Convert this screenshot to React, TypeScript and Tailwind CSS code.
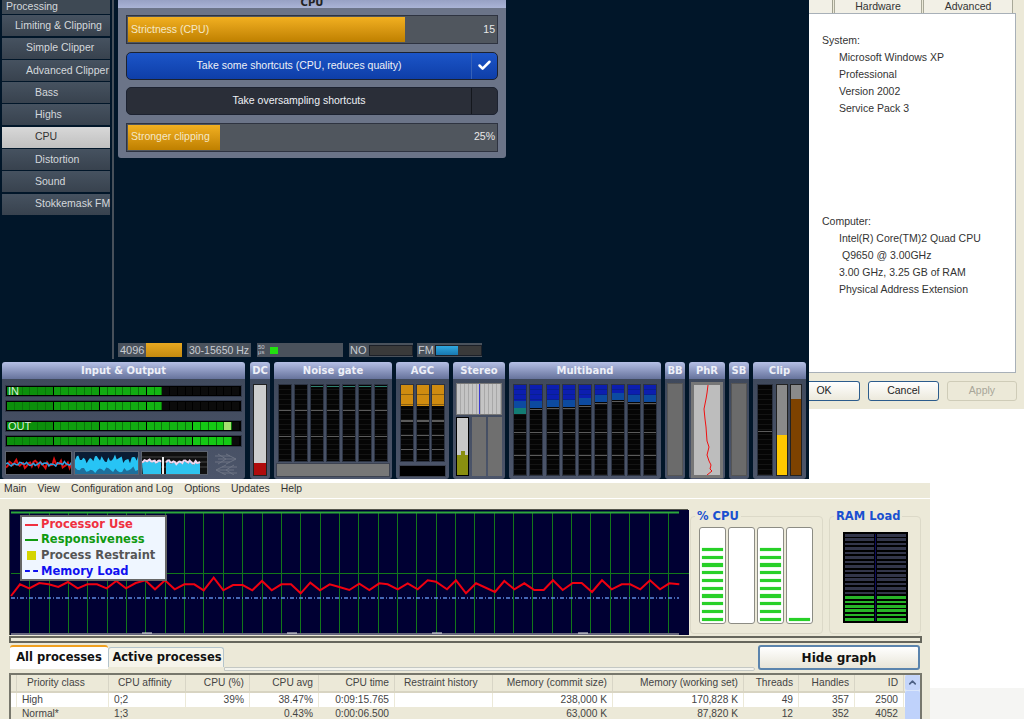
import React from 'react';
import { Check, ChevronUp } from 'lucide-react';

const sideItems: [string, string, string][] = [
  ['Limiting & Clipping', 'pl-[13px]', ''],
  ['Simple Clipper', 'pl-[24px]', ''],
  ['Advanced Clipper', 'pl-[24px]', ''],
  ['Bass', 'pl-[33px]', ''],
  ['Highs', 'pl-[33px]', ''],
  ['CPU', 'pl-[33px]', 'active'],
  ['Distortion', 'pl-[33px]', ''],
  ['Sound', 'pl-[33px]', ''],
  ['Stokkemask FM', 'pl-[33px]', ''],
];

const Slider = ({ label, value, fill }: { label: string; value: string; fill: number }) => (
  <div className="flex h-[29px] border border-[#2e3340] bg-[#50565e] p-px text-[10.5px] text-[#e8e8e8]">
    <div className="flex h-full items-center whitespace-nowrap bg-gradient-to-b from-[#f2b020] to-[#bf8000] pl-[3px] text-[#f4e8c8]" style={{ width: fill }}>
      {label}
    </div>
    <div className="flex flex-1 items-center justify-end pr-px">{value}</div>
  </div>
);

const Toggle = ({ label, on }: { label: string; on: boolean }) => (
  <div className={`flex h-[28px] rounded-[5px] border border-[#1c2230] text-[10.5px] text-[#eef1f6] ${on ? 'bg-gradient-to-b from-[#1c55c8] to-[#0e3ea8]' : 'bg-[#2a2e38]'}`}>
    <div className="flex flex-1 items-center justify-center">{label}</div>
    <div className={`flex w-[26px] items-center justify-center border-l ${on ? 'border-[#3561b8]' : 'border-[#14171d]'}`}>
      {on && <Check size={15} strokeWidth={4} className="text-white" />}
    </div>
  </div>
);

const Panel = ({ title, width, children, className = '' }: { title: string; width: number; children?: React.ReactNode; className?: string }) => (
  <div className="flex h-[117px] shrink-0 flex-col overflow-hidden rounded-[3px]" style={{ width }}>
    <div className="flex h-[17px] shrink-0 items-center justify-center bg-gradient-to-b from-[#b6c0e6] to-[#66739c] font-['DejaVu_Sans',sans-serif] text-[10px] font-bold text-[#eef0f8]">
      {title}
    </div>
    <div className={`flex-1 bg-gradient-to-b from-[#3f495c] to-[#4c556a] ${className}`}>{children}</div>
  </div>
);

const segColor = (i: number, peak: boolean) => {
  if (peak) return 'bg-[#a6e070]';
  if (i < 6) return 'bg-[#0c8f0c]';
  if (i < 12) return 'bg-[#0f9e0f]';
  if (i < 18) return 'bg-[#12ab12]';
  if (i < 24) return 'bg-[#13b513]';
  return 'bg-[#15c815]';
};

const HMeter = ({ count, peak, label }: { count: number; peak?: number; label?: string }) => (
  <div className="relative flex h-[12px] border border-[#30384a] bg-black p-px">
    {Array.from({ length: 30 }).map((_, i) => (
      <div
        key={i}
        className={`flex-1 border-r ${i % 6 === 5 ? 'border-black' : i < count ? 'border-[#0a760a]' : 'border-black'} ${i < count ? segColor(i, i === peak) : 'bg-[#0b0b0b]'}`}
      />
    ))}
    {label && <span className="absolute left-[2px] top-[-2px] text-[11px] leading-[14px] text-[#d7edd7]">{label}</span>}
  </div>
);

const Strip = ({ width = 14, height, fills = [], ticks = [] }: {
  width?: number; height: number; fills?: { top: number; h: number; c: string }[]; ticks?: number[];
}) => (
  <div
    className="relative shrink-0 border border-[#2c3342] bg-[repeating-linear-gradient(to_bottom,#050505_0,#050505_4px,#141414_4px,#141414_5px)]"
    style={{ width, height }}
  >
    {ticks.map(t => <div key={t} className="absolute inset-x-0 h-px bg-[#5c5c5c]" style={{ top: t }} />)}
    {fills.map(f => <div key={f.top} className={`absolute inset-x-0 ${f.c}`} style={{ top: f.top, height: f.h }} />)}
  </div>
);

const wave = (n: number, w: number, mid: number, amp: number, seed: number) =>
  Array.from({ length: n }).map((_, i) => {
    const x = (i / (n - 1)) * w;
    const y = mid + amp * (Math.sin(i * 1.7 + seed) * 0.6 + Math.sin(i * 0.53 + seed * 2) * 0.4 + Math.sin(i * 3.1) * 0.3);
    return `${x.toFixed(1)},${y.toFixed(1)}`;
  }).join(' ');

const shifted = (pts: string, dx: number) =>
  pts.split(' ').map(p => {
    const [x, y] = p.split(',');
    return `${Number(x) + dx},${y}`;
  }).join(' ');

const Scopes = () => (
  <div className="mt-[4px] flex items-center gap-[2px]">
    <svg width="67" height="24" className="border border-[#5d6470] bg-black">
      <polyline points={wave(40, 67, 12, 4, 1)} fill="none" stroke="#e01010" strokeWidth="2" />
      <polyline points={wave(40, 67, 12, 2, 3)} fill="none" stroke="#30a0e0" strokeWidth="1.5" />
    </svg>
    <svg width="65" height="24" className="border border-[#5d6470] bg-[#0a1c34]">
      <polygon points={`0,24 ${wave(40, 65, 7, 4, 2)} 65,24`} fill="#27c4f5" />
      <polygon points={`0,24 ${wave(30, 65, 18, 3, 5)} 65,24`} fill="#1d6f9c" />
    </svg>
    <svg width="67" height="24" className="border border-[#5d6470] bg-[#101010]">
      <line x1="0" x2="67" y1="5" y2="5" stroke="#444" />
      <line x1="0" x2="67" y1="10" y2="10" stroke="#444" />
      <line x1="0" x2="67" y1="15" y2="15" stroke="#444" />
      <polygon points={`1,24 ${wave(16, 19, 10, 1.5, 1)} 19,24`} fill="#2ec4f0" />
      <polygon points={`24,24 ${shifted(wave(24, 34, 11, 2, 2), 24)} 58,24`} fill="#2ec4f0" />
      <polyline points={wave(16, 19, 9, 1.5, 1)} fill="none" stroke="#f0d8f0" strokeWidth="2" />
      <polyline points={shifted(wave(24, 34, 10, 2, 2), 24)} fill="none" stroke="#f0d8f0" strokeWidth="2" />
      <line x1="21" x2="21" y1="5" y2="24" stroke="#eee" strokeWidth="2" />
    </svg>
    <svg width="28" height="24" className="ml-[2px]">
      <path d="M3 5 L18 5 M6 8 L24 8 M3 11 L18 11 M14 3 L24 8 L14 13 M6 3 L14 8 L6 13" fill="none" stroke="#6c7383" strokeWidth="1" />
      <path d="M10 16 L25 16 M4 19 L22 19 M10 22 L25 22 M14 14 L4 19 L14 24 M22 14 L14 19 L22 24" fill="none" stroke="#6c7383" strokeWidth="1" />
    </svg>
  </div>
);

const InputOutput = () => (
  <Panel title="Input & Output" width={243} className="px-[3px] pt-[6px]">
    <div className="flex flex-col gap-[3px]">
      <HMeter count={20} label="IN" />
      <HMeter count={20} />
    </div>
    <div className="mt-[8px] flex flex-col gap-[3px]">
      <HMeter count={29} peak={28} label="OUT" />
      <HMeter count={29} />
    </div>
    <Scopes />
  </Panel>
);

const NoiseGate = () => (
  <Panel title="Noise gate" width={118} className="px-[2px] pt-[5px]">
    <div className="flex justify-between px-[2px]">
      {[0, 1, 2, 3, 4, 5, 6].map(i => (
        <Strip key={i} height={78} ticks={[25, 51]} fills={i > 1 ? [{ top: 1, h: 1, c: 'bg-[#2f7f70]' }] : []} />
      ))}
    </div>
    <div className="mt-[1px] h-[14px] border border-[#3c4250] bg-[#777]" />
  </Panel>
);

const Agc = () => (
  <Panel title="AGC" width={53} className="px-[3px] pt-[5px]">
    <div className="flex justify-between px-px">
      {[0, 1, 2].map(i => (
        <Strip key={i} height={78} ticks={[35, 36, 50, 64]} fills={[{ top: 0, h: 21, c: 'bg-[repeating-linear-gradient(to_bottom,#d08c10_0,#d08c10_9px,#8a6010_9px,#8a6010_10px)]' }]} />
      ))}
    </div>
    <div className="mt-[3px] h-[12px] border border-[#3c4250] bg-black" />
  </Panel>
);

const Stereo = () => (
  <Panel title="Stereo" width={52} className="px-[3px] pt-[4px]">
    <div className="relative h-[32px] border border-[#777] bg-[repeating-linear-gradient(to_right,#c4c4c4_0,#c4c4c4_3px,#a8a8a8_3px,#a8a8a8_4px)]">
      <div className="absolute inset-y-0 left-[22px] w-px bg-[#3a3ad0]" />
    </div>
    <div className="mt-[2px] flex justify-between">
      <div className="relative h-[59px] w-[13px] border border-black bg-[#c8c8c8]">
        <div className="absolute inset-x-0 bottom-0 h-[20px] bg-[#8a8f10]" />
        <div className="absolute bottom-0 left-[4px] h-[24px] w-[4px] bg-[#8a8f10]" />
      </div>
      <div className="h-[59px] w-[14px] bg-[#6f6f6f]" />
      <div className="h-[59px] w-[14px] bg-[#6f6f6f]" />
    </div>
  </Panel>
);

const bandHeights = [23, 23, 22, 22, 20, 17, 15, 17, 17];

const Multiband = () => (
  <Panel title="Multiband" width={152} className="px-[4px] pt-[5px]">
    <div className="flex justify-between">
      {bandHeights.map((h, i) => (
        <Strip
          key={i}
          height={92}
          ticks={[h + 1, 47, 70]}
          fills={[
            { top: 0, h, c: 'bg-[repeating-linear-gradient(to_bottom,#0c1eb0_0,#0c1eb0_4px,#082090_4px,#082090_5px)]' },
            { top: h - 7, h: 7, c: 'bg-[#0c4aa0]' },
            ...(i === 0 ? [{ top: h, h: 6, c: 'bg-[#127c74]' }] : []),
          ]}
        />
      ))}
    </div>
  </Panel>
);

const Blank = ({ title }: { title: string }) => (
  <Panel title={title} width={20} className="px-[2px] pt-[4px]">
    <div className="h-[93px] border border-[#555] bg-[#6b6b6b]" />
  </Panel>
);

const Phr = () => (
  <Panel title="PhR" width={36} className="p-[2px] pt-[3px]">
    <svg width="32" height="96" className="border-[3px] border-[#777] bg-[#bdbdbd]">
      <polyline points="14,0 13,8 12,14 10,24 11,34 12,42 13,56 15,62 13,70 15,76 17,80 16,84 18,86 13,90" fill="none" stroke="#f01010" strokeWidth="1" />
    </svg>
  </Panel>
);

const Clip = () => (
  <Panel title="Clip" width={53} className="px-[4px] pt-[5px]">
    <div className="flex justify-between">
      <Strip width={16} height={92} ticks={[46]} />
      <div className="flex h-[92px] w-[12px] flex-col border border-[#222] bg-[#8a8a8a]">
        <div className="mt-[50px] flex-1 bg-[#ffc800]" />
      </div>
      <div className="flex h-[92px] w-[12px] flex-col border border-[#222] bg-[#8a8a8a]">
        <div className="mt-[14px] flex-1 bg-[#7d4200]" />
      </div>
    </div>
  </Panel>
);

const StatusBar = () => (
  <div className="mt-[-1px] flex h-[14px] text-[11px] leading-[14px] text-[#c8ccd2]">
    <div className="flex w-[64px] bg-[#4a525c]">
      <span className="pl-[2px]">4096</span>
      <div className="ml-[2px] flex-1 bg-gradient-to-b from-[#e8a820] to-[#c48a10]" />
    </div>
    <div className="ml-[5px] w-[64px] whitespace-nowrap bg-[#4a525c] text-center text-[10.5px]">30-15650 Hz</div>
    <div className="ml-[6px] flex w-[86px] items-center bg-[#4a525c] pl-[1px]">
      <span className="w-[12px] text-[6px] leading-[5px]">50<br />μs</span>
      <div className="h-[7px] w-[8px] bg-[#22e010]" />
    </div>
    <div className="ml-[6px] flex w-[64px] items-center bg-[#4a525c] pl-[1px]">
      NO<div className="ml-[2px] h-[11px] flex-1 border border-[#1c2028] bg-[#3a3a3a]" />
    </div>
    <div className="ml-[4px] flex w-[65px] items-center bg-[#4a525c] pl-[1px]">
      FM
      <div className="ml-[1px] flex h-[11px] flex-1 border border-[#1c2028] bg-[#3a3a3a]">
        <div className="w-[22px] bg-gradient-to-b from-[#30a8e0] to-[#1878b0]" />
      </div>
    </div>
  </div>
);

const DarkWindow = () => (
  <div className="flex w-[809px] shrink-0 flex-col bg-[#011629] font-['Liberation_Sans',sans-serif]">
    <div className="flex h-[361px]">
      <div className="w-[110px] shrink-0 pl-[2px] text-[10.5px] text-[#d4d8dc]">
        <div className="flex h-[14px] items-end overflow-hidden bg-[#3e4954] pl-[4px] leading-[16px]">Processing</div>
        {sideItems.map(([name, pad, active]) => (
          <div
            key={name}
            className={`mt-[1.3px] flex h-[21px] items-center whitespace-nowrap ${pad} ${active ? 'bg-gradient-to-b from-[#d8d8d8] to-[#c0c0c0] text-[#333]' : 'bg-gradient-to-b from-[#465260] to-[#38424e]'}`}
          >
            {name}
          </div>
        ))}
      </div>
      <div className="ml-[2px] h-[359px] w-[2px] bg-[#47505a]" />
      <div className="ml-[4px] flex flex-col">
        <div className="w-[388px] rounded-b-[3px] bg-[#6b7488]">
          <div className="flex h-[8px] items-end justify-center overflow-hidden bg-gradient-to-b from-[#97a1c4] to-[#aab4d6] font-['DejaVu_Sans',sans-serif] text-[10px] font-bold leading-[8px] text-[#222]">
            <span className="translate-y-[-1px]">CPU</span>
          </div>
          <div className="flex flex-col gap-[7.5px] px-[8px] pb-[6px] pt-[7px]">
            <Slider label="Strictness (CPU)" value="15" fill={277} />
            <Toggle label="Take some shortcuts (CPU, reduces quality)" on />
            <Toggle label="Take oversampling shortcuts" on={false} />
            <Slider label="Stronger clipping" value="25%" fill={92} />
          </div>
        </div>
        <div className="mt-auto"><StatusBar /></div>
        <div className="h-[4px]" />
      </div>
    </div>
    <div className="flex gap-[4px] pl-[2px] pt-px">
      <InputOutput />
      <div className="ml-px">
        <Panel title="DC" width={20} className="px-[3px] pt-[5px]">
          <div className="flex h-[92px] w-[14px] flex-col justify-end border border-[#222] bg-[#cdcdcd]">
            <div className="h-[12px] bg-[#b00c0c]" />
          </div>
        </Panel>
      </div>
      <NoiseGate />
      <Agc />
      <Stereo />
      <Multiband />
      <Blank title="BB" />
      <Phr />
      <Blank title="SB" />
      <Clip />
    </div>
  </div>
);

const XpButton = ({ label, cls, disabled }: { label: string; cls: string; disabled?: boolean }) => (
  <div className={`flex h-[20px] items-center justify-center rounded-[3px] border ${disabled ? 'border-[#cfccb8] text-[#a8a698]' : 'border-[#2c5c8c] bg-gradient-to-b from-white to-[#ece9dc] text-[#222]'} ${cls}`}>
    {label}
  </div>
);

const Dialog = () => (
  <div className="flex h-[409px] flex-1 flex-col bg-[#ece9d8] font-['Liberation_Sans',sans-serif] text-[10.5px] text-[#333]">
    <div className="flex h-[13px] items-start overflow-hidden leading-[13px]">
      <div className="h-[13px] w-[24px] border-r border-[#a0a090] bg-[#f2f0e6]" />
      <div className="ml-[1px] w-[88px] border-x border-[#a8a898] bg-[#f2f0e6] text-center">Hardware</div>
      <div className="ml-[1px] w-[90px] border-x border-[#a8a898] bg-[#f2f0e6] text-center">Advanced</div>
    </div>
    <div className="h-[360px] w-[207px] border-y border-r border-[#a8b0b8] bg-white pl-[13px]">
      <div className="mt-[18px] leading-[17px]">
        <div>System:</div>
        <div className="pl-[17px]">
          <div>Microsoft Windows XP</div>
          <div>Professional</div>
          <div>Version 2002</div>
          <div>Service Pack 3</div>
        </div>
      </div>
      <div className="mt-[96px] leading-[17px]">
        <div>Computer:</div>
        <div className="pl-[17px]">
          <div>Intel(R) Core(TM)2 Quad CPU</div>
          <div className="pl-[3px]">Q9650 @ 3.00GHz</div>
          <div>3.00 GHz, 3.25 GB of RAM</div>
          <div>Physical Address Extension</div>
        </div>
      </div>
    </div>
    <div className="mt-[8px] flex gap-[8px]">
      <XpButton label="OK" cls="w-[51px] rounded-l-none border-l-0 pr-[20px]" />
      <XpButton label="Cancel" cls="w-[71px]" />
      <XpButton label="Apply" cls="w-[70px]" disabled />
    </div>
  </div>
);

const redA = [[30,345],[57,310],[85,322],[115,306],[143,310],[172,318],[201,303],[230,322],[259,310],[288,310],[317,322],[346,300],[375,322],[404,306],[433,298],[462,325],[492,298],[521,325],[550,310],[580,310],[608,328],[638,290],[667,328],[696,312],[725,312],[754,328],[783,300],[812,328],[841,310],[870,310],[899,337],[928,305],[957,328],[986,310],[1015,318]];
const redB = [[25,267],[55,248],[85,267],[115,247],[140,250],[170,265],[200,247],[230,265],[260,238],[285,242],[318,265],[345,238],[375,277],[405,247],[462,273],[490,240],[520,265],[550,247],[580,267],[608,267],[636,238],[665,267],[695,246],[722,246],[753,273],[783,238],[812,265],[842,250],[868,250],[898,265],[927,238],[957,265],[985,247],[1015,250]];
const redLine = [
  ...redA.map(([x, y]) => `${(x / 3).toFixed(1)},${(480 + y / 3).toFixed(1)}`),
  ...redB.map(([x, y]) => `${(x / 3 + 340).toFixed(1)},${(500 + y / 3).toFixed(1)}`),
].join(' ');

const Graph = () => (
  <div className="relative h-[126px] w-[679px] shrink-0 border-l border-t border-[#55554a]">
    <svg width="679" height="125" viewBox="9 509 679 125" className="block bg-[#000033]">
      {Array.from({ length: 34 }).map((_, i) => {
        const x = Math.round(28.3 + i * 19.35) + 0.5;
        return <line key={i} x1={x} x2={x} y1="511" y2="632" stroke="#12781a" strokeWidth="1" />;
      })}
      <line x1="10" x2="688" y1="572.5" y2="572.5" stroke="#12781a" />
      <line x1="10" x2="678" y1="511.5" y2="511.5" stroke="#2ca83c" strokeWidth="2" />
      <line x1="10" x2="678" y1="597" y2="597" stroke="#5c88e0" strokeWidth="1.5" strokeDasharray="4 2 1 2" />
      <polyline points={redLine} fill="none" stroke="#f00010" strokeWidth="2" />
      <line x1="10" x2="678" y1="633" y2="633" stroke="#8a8a96" strokeWidth="1.5" />
      {[146, 291, 436, 582].map(x => <line key={x} x1={x - 5} x2={x + 5} y1="632" y2="632" stroke="#f0f0f0" />)}
    </svg>
    <div className="absolute left-[10px] top-[5px] flex h-[66px] w-[147px] flex-col justify-center border-2 border-[#666] bg-[#eff6ff] pl-[3px] font-['DejaVu_Sans',sans-serif] text-[11.5px] font-bold leading-[15.6px]">
      <div className="flex items-center text-[#f03040]"><span className="mr-[3px] h-[2px] w-[13px] bg-[#f03040]" />Processor Use</div>
      <div className="flex items-center text-[#109a10]"><span className="mr-[3px] h-[2px] w-[13px] bg-[#109a10]" />Responsiveness</div>
      <div className="flex items-center text-[#555]"><span className="ml-[2px] mr-[5px] h-[9px] w-[9px] bg-[#d4d400]" />Process Restraint</div>
      <div className="flex items-center text-[#1010f0]"><span className="mr-[3px] h-[2px] w-[13px] border-t-2 border-dashed border-[#1010f0]" />Memory Load</div>
    </div>
  </div>
);

const CpuBar = ({ n }: { n: number }) => (
  <div className="flex h-[97px] w-[27px] flex-col justify-end gap-[4.6px] rounded-[3px] border border-[#8c8c84] bg-white px-[2px] pb-[2px]">
    {Array.from({ length: n }).map((_, i) => <div key={i} className="h-[3.2px] bg-[#28d028] shadow-[0_0_1px_#28d028]" />)}
  </div>
);

const GroupBox = ({ title, width, children }: { title: string; width: number; children: React.ReactNode }) => (
  <fieldset className="h-[125px] shrink-0 rounded-[4px] border border-[#dcd9c8]" style={{ width }}>
    <legend className="ml-[4px] px-[2px] font-['DejaVu_Sans',sans-serif] text-[11.5px] font-bold leading-[14px] text-[#1a50d0]">{title}</legend>
    {children}
  </fieldset>
);

const RamColumn = () => (
  <div className="flex flex-1 flex-col justify-between bg-black">
    {Array.from({ length: 20 }).map((_, i) => (
      <div key={i} className={`h-[2.6px] ${i >= 14 ? 'bg-[#28b428]' : 'bg-[#33364a]'}`} />
    ))}
  </div>
);

const columns = 'grid-cols-[6px_92px_77px_64px_69px_76px_98px_120px_131px_55px_56px_49px]';
const headers = ['', 'Priority class', 'CPU affinity', 'CPU (%)', 'CPU avg', 'CPU time', 'Restraint history', 'Memory (commit size)', 'Memory (working set)', 'Threads', 'Handles', 'ID'];
const rows = [
  ['', 'High', '0;2', '39%', '38.47%', '0:09:15.765', '', '238,000 K', '170,828 K', '49', '357', '2500'],
  ['', 'Normal*', '1;3', '', '0.43%', '0:00:06.500', '', '63,000 K', '87,820 K', '12', '352', '4052'],
];

const ProcessTable = () => (
  <div className="mx-[9px] flex h-[47px] w-[913px] overflow-hidden border-x-2 border-t-2 border-[#77776c] text-[10.2px] text-[#444]">
    <div className="flex-1">
      <div className={`grid h-[18px] border-b-2 border-[#d8d4c2] ${columns}`}>
        {headers.map((h, i) => (
          <div key={i} className={`flex items-center whitespace-nowrap border-r border-[#d8d5c6] pr-[5px] ${i === 1 ? 'justify-start pl-[10px]' : i === 2 || i === 6 ? 'justify-start pl-[9px]' : 'justify-end'}`}>{h}</div>
        ))}
      </div>
      {rows.map((r, ri) => (
        <div key={ri} className={`grid h-[13.5px] leading-[13.5px] ${columns} ${ri === 0 ? 'bg-white' : ''}`}>
          {r.map((c, i) => (
            <div key={i} className={`whitespace-nowrap border-r border-[#ece9d8] pr-[5px] ${i === 1 || i === 2 ? 'pl-[5px] text-left' : 'text-right'}`}>{c}</div>
          ))}
        </div>
      ))}
    </div>
    <div className="flex w-[15px] shrink-0 flex-col bg-[#dbe6fa]">
      <div className="flex h-[15px] items-center justify-center rounded-[2px] bg-[#c4d5fa]"><ChevronUp size={11} strokeWidth={3.5} className="text-[#4d6185]" /></div>
      <div className="mt-px flex-1 rounded-[2px] bg-[#bfd2fb]" />
    </div>
  </div>
);

const ProcessWindow = () => (
  <div className="w-[930px] shrink-0 bg-[#ece9d8] font-['Liberation_Sans',sans-serif]">
    <div className="flex h-[12px] items-center gap-[11px] pl-[4px] text-[10.4px] text-[#333]">
      <span>Main</span><span>View</span><span>Configuration and Log</span><span>Options</span><span>Updates</span><span>Help</span>
    </div>
    <div className="mt-[3px] h-px bg-white" />
    <div className="flex gap-[2px] pl-[9px] pt-[10px]">
      <Graph />
      <GroupBox title="% CPU" width={133}>
        <div className="flex gap-[2px] pl-[8px] pt-[4px]">
          <CpuBar n={10} /><CpuBar n={0} /><CpuBar n={10} /><CpuBar n={1} />
        </div>
      </GroupBox>
      <div className="ml-[4px]">
        <GroupBox title="RAM Load" width={92}>
          <div className="mx-auto mt-[9px] flex h-[91px] w-[65px] gap-px border-2 border-black bg-black">
            <RamColumn />
            <div className="w-px bg-[#0c0c60]" />
            <RamColumn />
          </div>
        </GroupBox>
      </div>
    </div>
    <div className="mx-[9px] mt-[1px] h-[7px] w-[913px] border-2 border-[#66665c]" />
    <div className="flex h-[30px] pl-[10px] pt-[2px] font-['DejaVu_Sans',sans-serif] text-[11.5px] font-bold text-[#111]">
      <div className="flex h-[24px] w-[98px] items-center justify-center rounded-t-[3px] border-t-2 border-[#f0a020] bg-white">All processes</div>
      <div className="mt-[2px] flex h-[20px] w-[116px] items-center justify-center rounded-t-[3px] border border-b-0 border-[#b4c4cc] bg-[#f6f4ea] pl-[2px]">Active processes</div>
      <div className="mt-[22px] h-[4px] w-[531px] rounded-r-[2px] border border-[#c4c8c4] bg-[#f4f4ee]" />
      <div className="ml-[3px] flex h-[25px] w-[162px] items-center justify-center rounded-[3px] border-2 border-[#5b84ad] bg-gradient-to-b from-white to-[#e8e5d8] text-[12px]">Hide graph</div>
    </div>
    <ProcessTable />
  </div>
);

export default function App() {
  return (
    <div className="flex h-[719px] w-[1024px] flex-col overflow-hidden bg-white">
      <div className="flex h-[483px] shrink-0 items-start">
        <div className="h-[483px]"><DarkWindow /></div>
        <Dialog />
      </div>
      <div className="flex flex-1">
        <ProcessWindow />
        <div className="flex flex-1 flex-col">
          <div className="h-[205px]" />
          <div className="flex-1 bg-[#f5f5f3]" />
        </div>
      </div>
    </div>
  );
}
